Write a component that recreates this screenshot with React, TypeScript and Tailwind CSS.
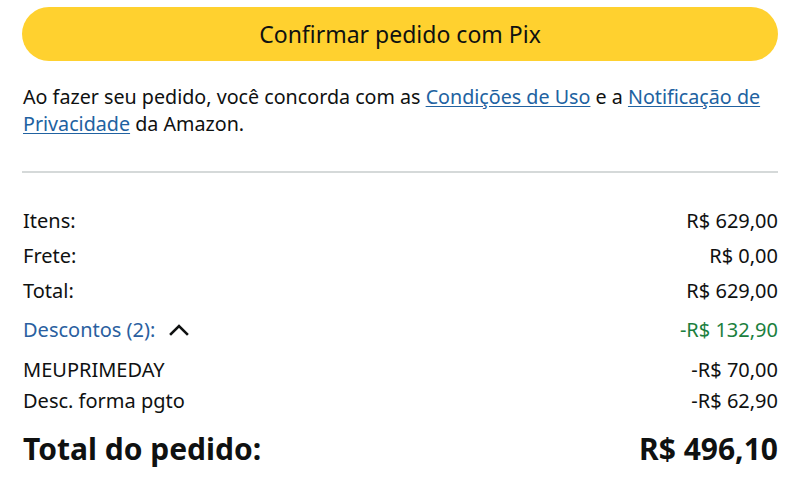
export default function App() {
    const rows = [
        { label: "Itens:", value: "R$ 629,00" },
        { label: "Frete:", value: "R$ 0,00" },
        { label: "Total:", value: "R$ 629,00" },
    ];

    return (
        <div className="w-[796px] h-[500px] bg-white overflow-hidden pl-[22px] pr-[18px] pt-[7px] text-[#0f1111]" style={{ fontFamily: '"Noto Sans", "Open Sans", sans-serif' }}>
            <button className="w-full h-[54px] rounded-full bg-[#ffd12f] text-[23px] text-[#0f1111] flex items-center justify-center">
                Confirmar pedido com Pix
            </button>

            <p className="mt-[22px] pl-px text-[19.7px] leading-[27px]">
                Ao fazer seu pedido, você concorda com as{" "}
                <a className="text-[#2162a1] underline underline-offset-2">Condições de Uso</a> e a{" "}
                <a className="text-[#2162a1] underline underline-offset-2">Notificação de</a>{" "}
                <a className="text-[#2162a1] underline underline-offset-2">Privacidade</a> da Amazon.
            </p>

            <div className="mt-[34px] h-[2px] bg-[#d5d9d9]" />

            <div className="mt-[36px] pl-px flex flex-col gap-[11px] text-[20px] leading-[24px]">
                {rows.map((r) => (
                    <div key={r.label} className="flex justify-between">
                        <span>{r.label}</span>
                        <span>{r.value}</span>
                    </div>
                ))}
            </div>

            <div className="mt-[15px] pl-px flex justify-between items-center text-[20px] leading-[24px]">
                <span className="flex items-center gap-[14px] text-[#2a5fa0]">
                    Descontos (2):
                    <svg width="20" height="12" viewBox="0 0 20 12" fill="none" stroke="#0f1111" strokeWidth="2.6" strokeLinecap="square">
                        <path d="M2 10 L10 2 L18 10" />
                    </svg>
                </span>
                <span className="text-[#1b7f3e]">-R$ 132,90</span>
            </div>

            <div className="mt-[16px] pl-px flex flex-col gap-[7px] text-[20px] leading-[24px]">
                <div className="flex justify-between">
                    <span>MEUPRIMEDAY</span>
                    <span>-R$ 70,00</span>
                </div>
                <div className="flex justify-between">
                    <span>Desc. forma pgto</span>
                    <span>-R$ 62,90</span>
                </div>
            </div>

            <div className="mt-[16px] pl-px flex justify-between items-center text-[30px] leading-[40px] font-bold">
                <span>Total do pedido:</span>
                <span>R$ 496,10</span>
            </div>
        </div>
    );
}
